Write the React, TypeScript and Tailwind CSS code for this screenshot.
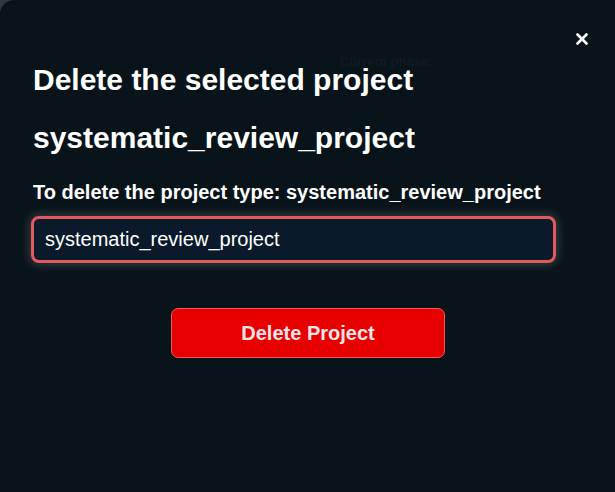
import { X } from "lucide-react";

export default function App() {
  return (
    <div className="w-[615px] h-[492px] bg-[#2e3a42] overflow-hidden" style={{ fontFamily: '"Liberation Sans", Arial, sans-serif' }}>
      <div className="relative w-full h-full bg-[#09131a] rounded-tl-[14px] px-[33px] pt-[62px]">
        <span className="absolute left-[340px] top-[52px] text-[13px] font-bold text-[#101a22]">Current phase:</span>
        <button className="absolute right-[24px] top-[30px] text-white">
          <X className="w-[18px] h-[18px]" strokeWidth={3.5} />
        </button>
        <h2 className="relative text-[30px] font-bold text-white leading-[36px]">Delete the selected project</h2>
        <h2 className="relative mt-[22px] text-[30px] font-bold text-white leading-[36px]">systematic_review_project</h2>
        <p className="mt-[24px] text-[20px] font-bold text-white leading-[24px] whitespace-nowrap">
          To delete the project type: systematic_review_project
        </p>
        <input
          readOnly
          value="systematic_review_project"
          className="mt-[12px] -ml-[2px] block w-[525px] h-[47px] rounded-[8px] border-[3px] border-[#e15a5d] bg-[#0a1a2b] px-[11px] text-[20px] text-white outline-none shadow-[0_0_10px_2px_rgba(255,255,255,0.18)]"
        />
        <div className="flex justify-center mt-[45px] pl-[1px]">
          <button className="w-[274px] h-[50px] rounded-[7px] border border-[#f0565a] bg-[#e60000] text-[20px] font-bold text-[#fbe3e6]">
            Delete Project
          </button>
        </div>
      </div>
    </div>
  );
}
